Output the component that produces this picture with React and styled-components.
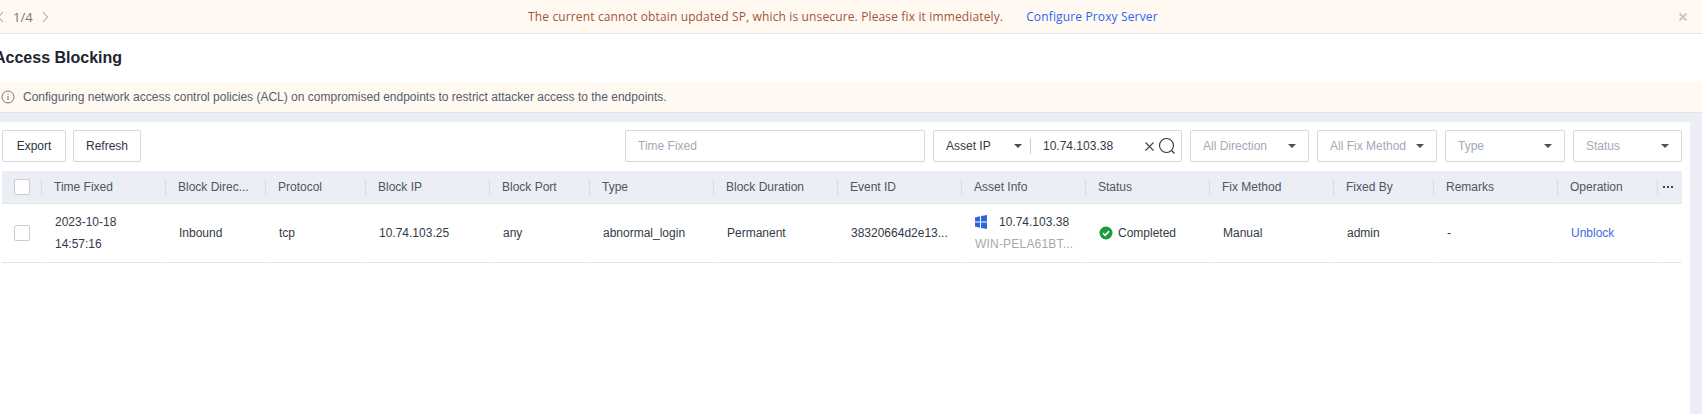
import React from 'react';
import styled, { createGlobalStyle } from 'styled-components';

const GlobalStyle = createGlobalStyle`
	html, body {
		margin: 0;
		padding: 0;
		height: 414px;
		overflow: hidden;
		background: #fff;
		font-family: 'Liberation Sans', Arial, sans-serif;
	}
	* {
		box-sizing: border-box;
	}
`;

const columns = '40px 124px 100px 100px 124px 100px 124px 124px 124px 124px 124px 124px 100px 124px 100px 24px';

const headers = [
	'Time Fixed',
	'Block Direc...',
	'Protocol',
	'Block IP',
	'Block Port',
	'Type',
	'Block Duration',
	'Event ID',
	'Asset Info',
	'Status',
	'Fix Method',
	'Fixed By',
	'Remarks',
	'Operation',
];

const App = () => (
	<Page>
		<GlobalStyle />
		<Banner>
			<Pager>
				<Chevron viewBox="0 0 8 12">
					<path d="M6 1 1.5 6 6 11" />
				</Chevron>
				<span>1/4</span>
				<Chevron viewBox="0 0 8 12">
					<path d="M2 1l4.5 5L2 11" />
				</Chevron>
			</Pager>
			<BannerMessage>
				The current cannot obtain updated SP, which is unsecure. Please fix it immediately.
				<BannerLink>Configure Proxy Server</BannerLink>
			</BannerMessage>
			<BannerClose viewBox="0 0 10 10">
				<path d="M1.5 1.5l7 7M8.5 1.5l-7 7" />
			</BannerClose>
		</Banner>

		<TitleRow>Access Blocking</TitleRow>

		<Notice>
			<svg width="14" height="14" viewBox="0 0 14 14" fill="none" stroke="#777" strokeWidth="1">
				<circle cx="7" cy="7" r="6" />
				<path d="M7 6v4.2M7 3.6v1.1" />
			</svg>
			Configuring network access control policies (ACL) on compromised endpoints to restrict attacker access to the
			endpoints.
		</Notice>

		<Band>
			<Panel>
				<Toolbar>
					<Button $width={64}>Export</Button>
					<Button $width={68}>Refresh</Button>
					<Filters>
						<Field $width={300} $muted>
							Time Fixed
						</Field>
						<AssetField>
							<AssetType>
								Asset IP
								<Caret />
							</AssetType>
							<AssetValue>10.74.103.38</AssetValue>
							<svg width="11" height="11" viewBox="0 0 11 11" fill="none" stroke="#444" strokeWidth="1.1">
								<path d="M1.5 1.5l8 8M9.5 1.5l-8 8" />
							</svg>
							<SearchIcon width="18" height="18" viewBox="0 0 18 18" fill="none" stroke="#333" strokeWidth="1.1">
								<circle cx="8.5" cy="8.5" r="7" />
								<path d="M13.5 13.5l3 3" />
							</SearchIcon>
						</AssetField>
						<Field $width={119} $muted>
							All Direction
							<Caret />
						</Field>
						<Field $width={120} $muted>
							All Fix Method
							<Caret />
						</Field>
						<Field $width={120} $muted>
							Type
							<Caret />
						</Field>
						<Field $width={109} $muted>
							Status
							<Caret />
						</Field>
					</Filters>
				</Toolbar>

				<HeadRow>
					<HeadCell>
						<Checkbox />
					</HeadCell>
					{headers.map(label => (
						<HeadCell key={label}>{label}</HeadCell>
					))}
					<HeadCell $dots>
						<Dots />
					</HeadCell>
				</HeadRow>

				<BodyRow>
					<Cell $tight>
						<Checkbox />
					</Cell>
					<Cell>
						<TwoLines>
							<div>2023-10-18</div>
							<div>14:57:16</div>
						</TwoLines>
					</Cell>
					<Cell>Inbound</Cell>
					<Cell>tcp</Cell>
					<Cell>10.74.103.25</Cell>
					<Cell>any</Cell>
					<Cell>abnormal_login</Cell>
					<Cell>Permanent</Cell>
					<Cell>38320664d2e13...</Cell>
					<Cell>
						<TwoLines>
							<AssetLine>
								<svg width="12" height="14" viewBox="0 0 12 14" fill="#2f64d6">
									<path d="M0 2.4 5 1.2v5.2H0zM6 1 12 0v6.4H6zM0 7.5h5v5.3L0 11.6zM6 7.5h6V14l-6-1z" />
								</svg>
								10.74.103.38
							</AssetLine>
							<HostName>WIN-PELA61BT...</HostName>
						</TwoLines>
					</Cell>
					<Cell $tight>
						<StatusBadge>
							<svg width="14" height="14" viewBox="0 0 14 14">
								<circle cx="7" cy="7" r="6.5" fill="#1a9a3c" />
								<path d="M4 7.2l2.2 2.1L10 5.2" fill="none" stroke="#fff" strokeWidth="1.7" />
							</svg>
							Completed
						</StatusBadge>
					</Cell>
					<Cell>Manual</Cell>
					<Cell>admin</Cell>
					<Cell>-</Cell>
					<Cell>
						<RowLink>Unblock</RowLink>
					</Cell>
					<Cell />
				</BodyRow>
			</Panel>
		</Band>
	</Page>
);
export default App;

const Page = styled.div`
	height: 414px;
	display: flex;
	flex-direction: column;
	font-size: 12px;
	color: #333a47;
	background: #fff;
`;

const Banner = styled.div`
	height: 34px;
	flex: none;
	display: flex;
	align-items: center;
	background: #fff9f2;
	border-bottom: 1px solid #e3e4e6;
`;

const Pager = styled.div`
	width: 70px;
	margin-left: -3px;
	display: flex;
	align-items: center;
	gap: 8px;
	color: #777;
	font-size: 13px;
	font-family: 'Open Sans', sans-serif;
`;

const Chevron = styled.svg`
	width: 8px;
	height: 12px;
	fill: none;
	stroke: #999;
	stroke-width: 1;
`;

const BannerMessage = styled.div`
	flex: 1;
	padding-left: 461px;
	color: #a1553a;
	font-family: 'Open Sans', sans-serif;
	font-size: 12px;
	letter-spacing: 0.14px;
	white-space: nowrap;
`;

const BannerLink = styled.a`
	margin-left: 23px;
	color: #2a66f0;
`;

const BannerClose = styled.svg`
	width: 10px;
	height: 10px;
	margin-right: 14px;
	fill: none;
	stroke: #c9c9c9;
	stroke-width: 2;
`;

const TitleRow = styled.div`
	height: 48px;
	flex: none;
	margin-left: -6px;
	display: flex;
	align-items: center;
	font-size: 16px;
	font-weight: 700;
	color: #1e2430;
`;

const Notice = styled.div`
	height: 31px;
	flex: none;
	padding-left: 1px;
	display: flex;
	align-items: center;
	gap: 8px;
	background: #fff9f2;
	border-bottom: 1px solid #e3e4e6;
	color: #555c6b;
`;

const Band = styled.div`
	flex: 1;
	display: flex;
	padding: 9px 12px 0 0;
	background: #ebeef5;
`;

const Panel = styled.div`
	flex: 1;
	padding: 8px 8px 0 2px;
	background: #fff;
`;

const Toolbar = styled.div`
	height: 32px;
	margin-bottom: 9px;
	display: flex;
	gap: 7px;
`;

const Filters = styled.div`
	margin-left: auto;
	display: flex;
	gap: 8px;
`;

const Button = styled.div`
	width: ${props => props.$width}px;
	display: flex;
	align-items: center;
	justify-content: center;
	border: 1px solid #d5d8df;
	border-radius: 2px;
	color: #2f3643;
`;

const Field = styled.div`
	width: ${props => props.$width}px;
	padding: 0 12px;
	display: flex;
	align-items: center;
	justify-content: space-between;
	border: 1px solid #d5d8df;
	border-radius: 2px;
	color: ${props => (props.$muted ? '#a3a9b6' : '#333a47')};
`;

const AssetField = styled.div`
	width: 249px;
	padding: 0 5px 0 12px;
	display: flex;
	align-items: center;
	border: 1px solid #d5d8df;
	border-radius: 2px;
`;

const AssetType = styled.div`
	width: 85px;
	height: 16px;
	padding-right: 8px;
	display: flex;
	align-items: center;
	justify-content: space-between;
	border-right: 1px solid #c9ccd3;
`;

const AssetValue = styled.div`
	flex: 1;
	padding-left: 12px;
`;

const SearchIcon = styled.svg`
	margin-left: 3px;
`;

const Caret = styled.i`
	width: 0;
	height: 0;
	border-left: 4px solid transparent;
	border-right: 4px solid transparent;
	border-top: 4px solid #4a4f5a;
`;

const HeadRow = styled.div`
	height: 33px;
	display: grid;
	grid-template-columns: ${columns};
	align-items: center;
	background: #ebeef5;
	border-bottom: 1px solid #e0e3ea;
	color: #4e5564;
`;

const HeadCell = styled.div`
	height: 17px;
	padding-left: ${props => (props.$dots ? '5px' : '12px')};
	display: flex;
	align-items: center;
	white-space: nowrap;
	border-right: 1px solid #d9dce4;

	&:last-child {
		border-right: none;
	}
`;

const Checkbox = styled.span`
	width: 16px;
	height: 16px;
	flex: none;
	background: #fff;
	border: 1px solid #c8ccd4;
	border-radius: 2px;
`;

const Dots = styled.span`
	width: 2px;
	height: 2px;
	background: #444;
	box-shadow: 4px 0 0 #444, 8px 0 0 #444;
`;

const BodyRow = styled.div`
	height: 59px;
	display: grid;
	grid-template-columns: ${columns};
`;

const Cell = styled.div`
	padding-left: ${props => (props.$tight ? '12px' : '13px')};
	display: flex;
	align-items: center;
	white-space: nowrap;
	border-bottom: 1px solid #e3e5ea;
	border-right: 1px solid #fff;
`;

const TwoLines = styled.div`
	line-height: 22px;
`;

const AssetLine = styled.div`
	display: flex;
	align-items: center;
	gap: 12px;
`;

const HostName = styled.div`
	color: #a8a8a8;
	letter-spacing: 0.2px;
`;

const StatusBadge = styled.div`
	display: flex;
	align-items: center;
	gap: 5px;
	padding-left: 1px;
`;

const RowLink = styled.a`
	color: #3f6ae0;
`;
